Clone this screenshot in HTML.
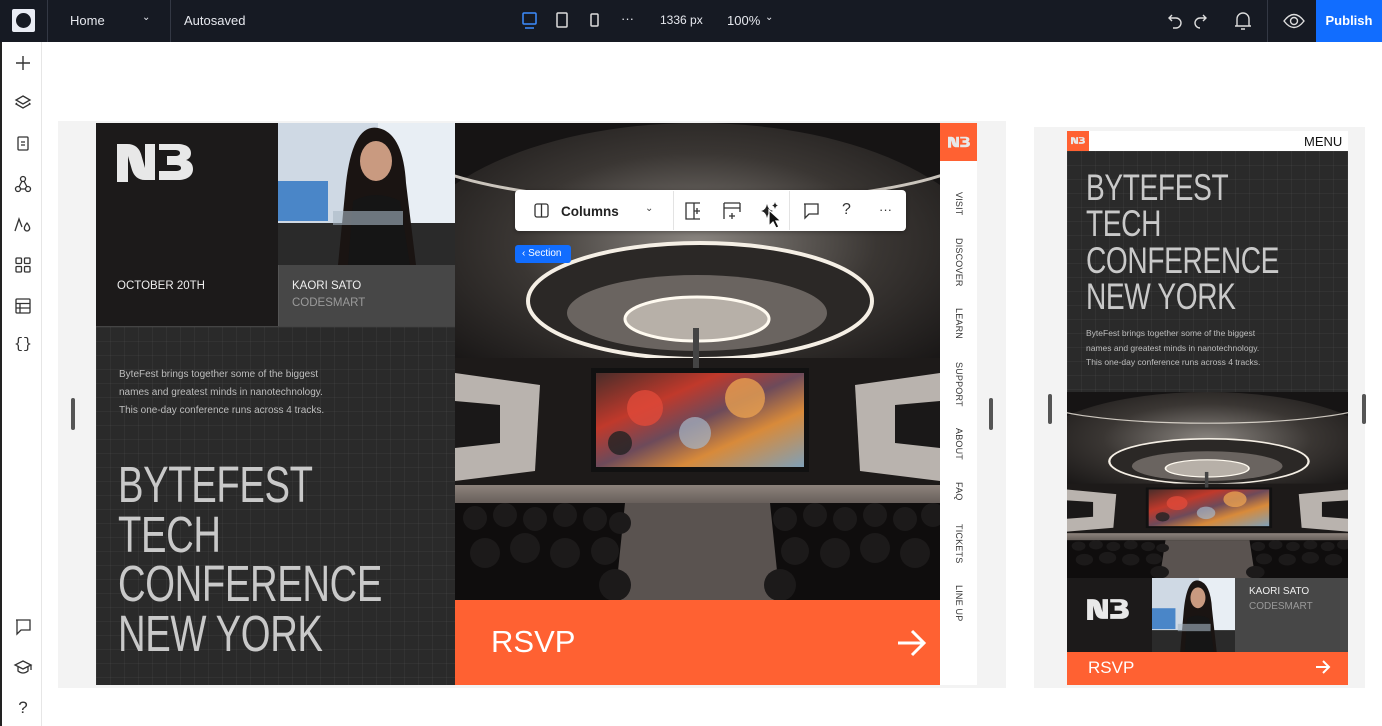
<!DOCTYPE html>
<html><head><meta charset="utf-8"><style>
*{margin:0;padding:0;box-sizing:border-box}
body{width:1382px;height:726px;overflow:hidden;background:#fff;font-family:"Liberation Sans",sans-serif;position:relative}
.a{position:absolute}
.top{left:0;top:0;width:1382px;height:42px;background:#161a23;color:#e6e8ee;font-size:13px}
.side{left:0;top:42px;width:42px;height:684px;background:#fff;border-left:2px solid #222;border-right:1px solid #e6e6e6}
.ic{position:absolute;left:11px;width:20px;height:20px}
.grid{background-color:#2a2a2a;background-image:linear-gradient(rgba(255,255,255,.035) 1px,transparent 1px),linear-gradient(90deg,rgba(255,255,255,.035) 1px,transparent 1px);background-size:14px 14px}
.h{color:#c9c9c9;transform-origin:0 0;white-space:nowrap;letter-spacing:-0.5px}
.nav{position:absolute;left:951px;color:#333;font-size:9px;transform:rotate(90deg);transform-origin:0 0;white-space:nowrap;letter-spacing:.2px}
</style></head><body>
<svg width="0" height="0" style="position:absolute">
<defs>
<radialGradient id="ceil" cx="50%" cy="40%" r="60%"><stop offset="0" stop-color="#8a8580"/><stop offset=".5" stop-color="#3a3633"/><stop offset="1" stop-color="#141212"/></radialGradient>
<linearGradient id="scr" x1="0" x2="1" y1="0" y2="1"><stop offset="0" stop-color="#4a2d2a"/><stop offset=".3" stop-color="#c0392b"/><stop offset=".5" stop-color="#6d4a5a"/><stop offset=".7" stop-color="#d88a3a"/><stop offset="1" stop-color="#7fa0b8"/></linearGradient>
<linearGradient id="stg" x1="0" x2="0" y1="0" y2="1"><stop offset="0" stop-color="#8d837c"/><stop offset="1" stop-color="#3a3432"/></linearGradient>
<symbol id="aud" viewBox="0 0 485 477" preserveAspectRatio="none">
<rect width="485" height="477" fill="#161414"/>
<ellipse cx="242" cy="150" rx="300" ry="150" fill="url(#ceil)"/>
<ellipse cx="242" cy="20" rx="290" ry="60" fill="none" stroke="#f2ece2" stroke-width="3" opacity=".8"/>
<ellipse cx="245" cy="178" rx="172" ry="58" fill="#2b2826" stroke="#f5efe5" stroke-width="4"/>
<ellipse cx="242" cy="190" rx="130" ry="38" fill="#6a6460"/>
<ellipse cx="242" cy="196" rx="72" ry="22" fill="#b7b0a8" stroke="#fffaf0" stroke-width="3"/>
<rect x="0" y="235" width="485" height="135" fill="#1d1a19"/>
<polygon points="0,250 85,262 80,348 0,358" fill="#b9b3ae"/>
<polygon points="0,278 45,282 45,320 0,325" fill="#1a1818"/>
<polygon points="485,250 400,262 405,348 485,358" fill="#b9b3ae"/>
<polygon points="485,278 440,282 440,320 485,325" fill="#1a1818"/>
<rect x="238" y="205" width="6" height="40" fill="#444"/>
<rect x="136" y="245" width="218" height="104" fill="#111"/>
<rect x="141" y="250" width="208" height="94" fill="url(#scr)"/>
<circle cx="190" cy="285" r="18" fill="#e04a3a" opacity=".8"/><circle cx="290" cy="275" r="20" fill="#e8a050" opacity=".8"/><circle cx="240" cy="310" r="16" fill="#a8b8c8" opacity=".7"/><circle cx="165" cy="320" r="12" fill="#222" opacity=".8"/>
<rect x="0" y="362" width="485" height="40" fill="url(#stg)"/>
<rect x="0" y="380" width="485" height="97" fill="#0f0d0d"/>
<polygon points="170,380 315,380 325,477 160,477" fill="#5a5350"/>
<g fill="#1c1a1a">
<circle cx="20" cy="395" r="12"/><circle cx="50" cy="392" r="12"/><circle cx="80" cy="396" r="12"/><circle cx="110" cy="392" r="12"/><circle cx="140" cy="396" r="12"/><circle cx="165" cy="400" r="11"/>
<circle cx="330" cy="396" r="12"/><circle cx="360" cy="392" r="12"/><circle cx="390" cy="396" r="12"/><circle cx="420" cy="392" r="12"/><circle cx="450" cy="396" r="12"/><circle cx="478" cy="392" r="12"/>
<circle cx="30" cy="430" r="15"/><circle cx="70" cy="425" r="15"/><circle cx="110" cy="430" r="15"/><circle cx="150" cy="428" r="14"/><circle cx="340" cy="428" r="14"/><circle cx="380" cy="430" r="15"/><circle cx="420" cy="425" r="15"/><circle cx="460" cy="430" r="15"/>
<circle cx="160" cy="462" r="16"/><circle cx="325" cy="462" r="16"/>
</g>
</symbol>
<symbol id="logo" viewBox="0 0 76 40"><path fill="#e8e8e8" d="M0 2h10c8 0 12 4 14 10l4 14V2h10v36h-10c-7 0-11-4-13-10l-4-14v26H0z M42 2h18c10 0 14 4 14 9 0 4-2 6-5 7 4 1 7 4 7 9 0 7-6 11-15 11H42v-9h16c4 0 6-1 6-3s-2-3-6-3h-8v-9h8c3 0 5-1 5-3s-2-3-5-3H42z"/></symbol>
<symbol id="face" viewBox="0 0 177 142" preserveAspectRatio="none">
<rect width="177" height="142" fill="#cfd9e4"/><rect x="100" y="0" width="77" height="110" fill="#e8eef4"/>
<rect x="0" y="58" width="50" height="40" fill="#4a86c8"/><rect x="0" y="100" width="177" height="42" fill="#2a2a2a"/>
<path d="M60 142 L68 60 Q75 0 100 5 Q125 10 128 60 L138 142z" fill="#1a1412"/>
<ellipse cx="98" cy="38" rx="16" ry="20" fill="#c99a80"/>
<path d="M70 142 L75 78 Q98 66 122 78 L132 142z" fill="#151515"/>
<rect x="55" y="88" width="70" height="14" fill="#a9b8c4" opacity=".6"/>
</symbol>
</defs></svg>

<div class="a top">
 <div class="a" style="left:12px;top:9px;width:23px;height:23px;background:#e9ecf4;border-radius:2px"><div class="a" style="left:4px;top:4px;width:15px;height:15px;border-radius:50%;background:#161a23"></div></div>
 <div class="a" style="left:47px;top:0;width:1px;height:42px;background:#333844"></div>
 <div class="a" style="left:70px;top:13px">Home</div>
 <div class="a" style="left:142px;top:12px;font-size:10px">⌄</div>
 <div class="a" style="left:170px;top:0;width:1px;height:42px;background:#333844"></div>
 <div class="a" style="left:184px;top:13px">Autosaved</div>
 <svg class="a" style="left:521px;top:11px" width="18" height="20" viewBox="0 0 18 20"><rect x="2" y="2" width="13" height="11" rx="1" fill="none" stroke="#3d8cff" stroke-width="1.5"/><path d="M4 17h9" stroke="#3d8cff" stroke-width="1.5"/></svg>
 <svg class="a" style="left:555px;top:11px" width="14" height="18"><rect x="2" y="2" width="10" height="14" rx="1" fill="none" stroke="#ddd" stroke-width="1.5"/></svg>
 <svg class="a" style="left:589px;top:12px" width="12" height="16"><rect x="2" y="2" width="7" height="12" rx="1" fill="none" stroke="#ddd" stroke-width="1.5"/></svg>
 <div class="a" style="left:621px;top:11px">···</div>
 <div class="a" style="left:660px;top:13px;font-size:12px">1336 px</div>
 <div class="a" style="left:727px;top:13px">100%</div>
 <div class="a" style="left:765px;top:12px;font-size:10px">⌄</div>
 <svg class="a" style="left:1167px;top:11px" width="48" height="20" fill="none" stroke="#ddd" stroke-width="1.4"><path d="M5 4L2 7l3 3M2 7h7a5 5 0 0 1 0 10H6"/><path d="M36 4l3 3-3 3M39 7h-6a5 5 0 0 0 0 10"/></svg>
 <svg class="a" style="left:1233px;top:10px" width="20" height="22" fill="none" stroke="#ddd" stroke-width="1.4"><path d="M4 16V9a6 6 0 0 1 12 0v7h2H2zM8 19h4"/></svg>
 <div class="a" style="left:1267px;top:0;width:1px;height:42px;background:#333844"></div>
 <svg class="a" style="left:1282px;top:10px" width="24" height="22" fill="none" stroke="#ddd" stroke-width="1.4"><path d="M2 11q10-13 20 0q-10 13-20 0z"/><circle cx="12" cy="11" r="3.5"/></svg>
 <div class="a" style="left:1316px;top:0;width:66px;height:42px;background:#116dff;color:#fff;font-weight:bold;font-size:13px;line-height:42px;text-align:center">Publish</div>
</div>

<div class="a side">
 <svg class="ic" style="top:11px" viewBox="0 0 20 20" fill="none" stroke="#333" stroke-width="1.4"><path d="M10 3v14M3 10h14"/></svg>
 <svg class="ic" style="top:51px" viewBox="0 0 20 20" fill="none" stroke="#333" stroke-width="1.3"><path d="M10 3l7 4-7 4-7-4z"/><path d="M4 10l-1 1 7 4 7-4-1-1"/></svg>
 <svg class="ic" style="top:92px" viewBox="0 0 20 20" fill="none" stroke="#333" stroke-width="1.3"><rect x="5" y="3" width="10" height="13" rx="1"/><path d="M8 8h4M8 11h4"/></svg>
 <svg class="ic" style="top:132px" viewBox="0 0 20 20" fill="none" stroke="#333" stroke-width="1.3"><circle cx="10" cy="5" r="2.5"/><circle cx="5" cy="15" r="2.5"/><circle cx="15" cy="15" r="2.5"/><path d="M9 7l-3 6M11 7l3 6M7.5 15h5"/></svg>
 <svg class="ic" style="top:173px" viewBox="0 0 20 20" fill="none" stroke="#333" stroke-width="1.3"><path d="M2 16L6 4l3 8"/><path d="M14 8q-4 5-2 7a2.5 2.5 0 0 0 4 0q2-2-2-7z"/></svg>
 <svg class="ic" style="top:213px" viewBox="0 0 20 20" fill="none" stroke="#333" stroke-width="1.3"><rect x="3" y="3" width="5.5" height="5.5" rx="1"/><rect x="11.5" y="3" width="5.5" height="5.5" rx="1"/><rect x="3" y="11.5" width="5.5" height="5.5" rx="1"/><rect x="11.5" y="11.5" width="5.5" height="5.5" rx="1"/></svg>
 <svg class="ic" style="top:254px" viewBox="0 0 20 20" fill="none" stroke="#333" stroke-width="1.3"><rect x="3" y="3" width="14" height="14" rx="1"/><path d="M3 7.5h14M3 12h14M7 7.5v9.5"/></svg>
 <div class="ic" style="top:294px;font-size:15px;color:#333;text-align:center;font-family:'Liberation Mono',monospace">{}</div>
 <svg class="ic" style="top:575px" viewBox="0 0 20 20" fill="none" stroke="#333" stroke-width="1.3"><path d="M3 3h14v10H8l-4 4V3z"/></svg>
 <svg class="ic" style="top:615px" viewBox="0 0 20 20" fill="none" stroke="#333" stroke-width="1.3"><path d="M10 4l8 4-8 4-8-4zM5 10v4q5 4 10 0v-4M18 8v5"/></svg>
 <div class="ic" style="top:656px;font-size:17px;color:#333;text-align:center">?</div>
</div>

<div class="a" style="left:58px;top:121px;width:948px;height:567px;background:#f3f3f3"></div>
<div class="a" style="left:71px;top:398px;width:4px;height:32px;background:#555;border-radius:2px"></div>
<div class="a" style="left:989px;top:398px;width:4px;height:32px;background:#555;border-radius:2px"></div>

<div class="a" style="left:96px;top:123px;width:182px;height:203px;background:#1c1a1a"></div>
<svg class="a" style="left:117px;top:142px" width="76" height="40"><use href="#logo"/></svg>
<div class="a" style="left:117px;top:280px;color:#eee;font-size:11.5px">OCTOBER 20TH</div>
<svg class="a" style="left:278px;top:123px" width="177" height="142"><use href="#face"/></svg>
<div class="a" style="left:278px;top:265px;width:177px;height:61px;background:#474747;border-left:1px solid #555"></div>
<div class="a" style="left:292px;top:280px;color:#eee;font-size:11.5px">KAORI SATO</div>
<div class="a" style="left:292px;top:297px;color:#9a9a9a;font-size:11.5px">CODESMART</div>
<div class="a grid" style="left:96px;top:326px;width:359px;height:359px;border-top:1px solid #444"></div>
<div class="a" style="left:119px;top:366px;color:#bdbdbd;font-size:10px;line-height:18px">ByteFest brings together some of the biggest<br>names and greatest minds in nanotechnology.<br>This one-day conference runs across 4 tracks.</div>
<div class="a h" style="left:118px;top:460px;font-size:51px;line-height:49.5px;transform:scaleX(.75)">BYTEFEST<br>TECH<br>CONFERENCE<br>NEW YORK</div>

<svg class="a" style="left:455px;top:123px" width="485" height="477"><use href="#aud"/></svg>
<div class="a" style="left:455px;top:600px;width:485px;height:85px;background:#ff6132"></div>
<div class="a" style="left:491px;top:624px;color:#fff;font-size:31px">RSVP</div>
<svg class="a" style="left:896px;top:628px" width="32" height="30" fill="none" stroke="#fff" stroke-width="3"><path d="M2 15h26M16 3l12 12-12 12"/></svg>

<div class="a" style="left:940px;top:123px;width:37px;height:562px;background:#fff"></div>
<div class="a" style="left:940px;top:123px;width:37px;height:38px;background:#ff6132"></div>
<svg class="a" style="left:948px;top:136px" width="22" height="12"><use href="#logo"/></svg>
<div class="nav" style="top:192px;left:964px">VISIT</div>
<div class="nav" style="top:238px;left:964px">DISCOVER</div>
<div class="nav" style="top:308px;left:964px">LEARN</div>
<div class="nav" style="top:362px;left:964px">SUPPORT</div>
<div class="nav" style="top:428px;left:964px">ABOUT</div>
<div class="nav" style="top:482px;left:964px">FAQ</div>
<div class="nav" style="top:524px;left:964px">TICKETS</div>
<div class="nav" style="top:585px;left:964px">LINE UP</div>

<div class="a" style="left:515px;top:190px;width:391px;height:41px;background:#fff;border-radius:4px;box-shadow:0 1px 4px rgba(0,0,0,.3)"></div>
<svg class="a" style="left:533px;top:202px" width="18" height="18" fill="none" stroke="#333" stroke-width="1.3"><rect x="2" y="2" width="13" height="13" rx="2"/><path d="M8.5 2v13"/></svg>
<div class="a" style="left:561px;top:204px;font-size:13.5px;color:#222;font-weight:bold">Columns</div>
<div class="a" style="left:645px;top:203px;font-size:10px;color:#444">⌄</div>
<div class="a" style="left:673px;top:191px;width:1px;height:39px;background:#e3e3e3"></div>
<svg class="a" style="left:684px;top:201px" width="20" height="20" fill="none" stroke="#333" stroke-width="1.3"><path d="M2 2h8v16H2zM10 2h6M10 18h6M13 7v6M10 10h6"/></svg>
<svg class="a" style="left:722px;top:201px" width="20" height="20" fill="none" stroke="#333" stroke-width="1.3"><path d="M2 2h16M2 2v16M18 2v9M2 7h16M10 12v6M7 15h6"/></svg>
<svg class="a" style="left:759px;top:200px" width="22" height="22"><path d="M8 4q1 6 6 7q-5 1-6 7q-1-6-6-7q5-1 6-7z" fill="#222"/><path d="M16 2q.5 3 3 3.5q-2.5.5-3 3.5q-.5-3-3-3.5q2.5-.5 3-3.5z" fill="#222"/></svg>
<svg class="a" style="left:767px;top:208px" width="18" height="24"><path d="M2 2v16l4-4 3 6 3-1-3-6h5z" fill="#111" stroke="#fff" stroke-width="1.2"/></svg>
<div class="a" style="left:789px;top:191px;width:1px;height:39px;background:#e3e3e3"></div>
<svg class="a" style="left:802px;top:202px" width="18" height="18" fill="none" stroke="#333" stroke-width="1.3"><path d="M2 2h14v10H7l-4 4V2z"/></svg>
<div class="a" style="left:842px;top:201px;font-size:16px;color:#333">?</div>
<div class="a" style="left:879px;top:202px;font-size:13px;color:#333">···</div>
<div class="a" style="left:515px;top:245px;width:56px;height:18px;background:#116dff;border-radius:3px;color:#fff;font-size:10px;line-height:18px;padding-left:7px">‹ Section</div>

<div class="a" style="left:1034px;top:127px;width:331px;height:561px;background:#f3f3f3"></div>
<div class="a" style="left:1048px;top:394px;width:4px;height:30px;background:#555;border-radius:2px"></div>
<div class="a" style="left:1362px;top:394px;width:4px;height:30px;background:#555;border-radius:2px"></div>
<div class="a" style="left:1067px;top:131px;width:281px;height:20px;background:#fff"></div>
<div class="a" style="left:1067px;top:131px;width:22px;height:20px;background:#ff6132"></div>
<svg class="a" style="left:1071px;top:136px" width="14" height="9"><use href="#logo"/></svg>
<div class="a" style="left:1304px;top:134px;font-size:13px;color:#111">MENU</div>
<div class="a grid" style="left:1067px;top:151px;width:281px;height:241px"></div>
<div class="a h" style="left:1086px;top:170px;font-size:37px;line-height:36.3px;transform:scaleX(.76)">BYTEFEST<br>TECH<br>CONFERENCE<br>NEW YORK</div>
<div class="a" style="left:1086px;top:326px;color:#bdbdbd;font-size:8.5px;line-height:14.5px">ByteFest brings together some of the biggest<br>names and greatest minds in nanotechnology.<br>This one-day conference runs across 4 tracks.</div>
<svg class="a" style="left:1067px;top:392px" width="281" height="186"><use href="#aud"/></svg>
<div class="a" style="left:1067px;top:578px;width:85px;height:74px;background:#1c1a1a"></div>
<svg class="a" style="left:1087px;top:598px" width="42" height="22"><use href="#logo"/></svg>
<svg class="a" style="left:1152px;top:578px" width="83" height="74"><use href="#face"/></svg>
<div class="a" style="left:1235px;top:578px;width:113px;height:74px;background:#474747"></div>
<div class="a" style="left:1249px;top:586px;color:#eee;font-size:10px">KAORI SATO</div>
<div class="a" style="left:1249px;top:601px;color:#999;font-size:10px">CODESMART</div>
<div class="a" style="left:1067px;top:652px;width:281px;height:33px;background:#ff6132"></div>
<div class="a" style="left:1088px;top:658px;color:#fff;font-size:17px">RSVP</div>
<svg class="a" style="left:1315px;top:659px" width="16" height="16" fill="none" stroke="#fff" stroke-width="2"><path d="M1 8h13M8 2l6 6-6 6"/></svg>
</body></html>
